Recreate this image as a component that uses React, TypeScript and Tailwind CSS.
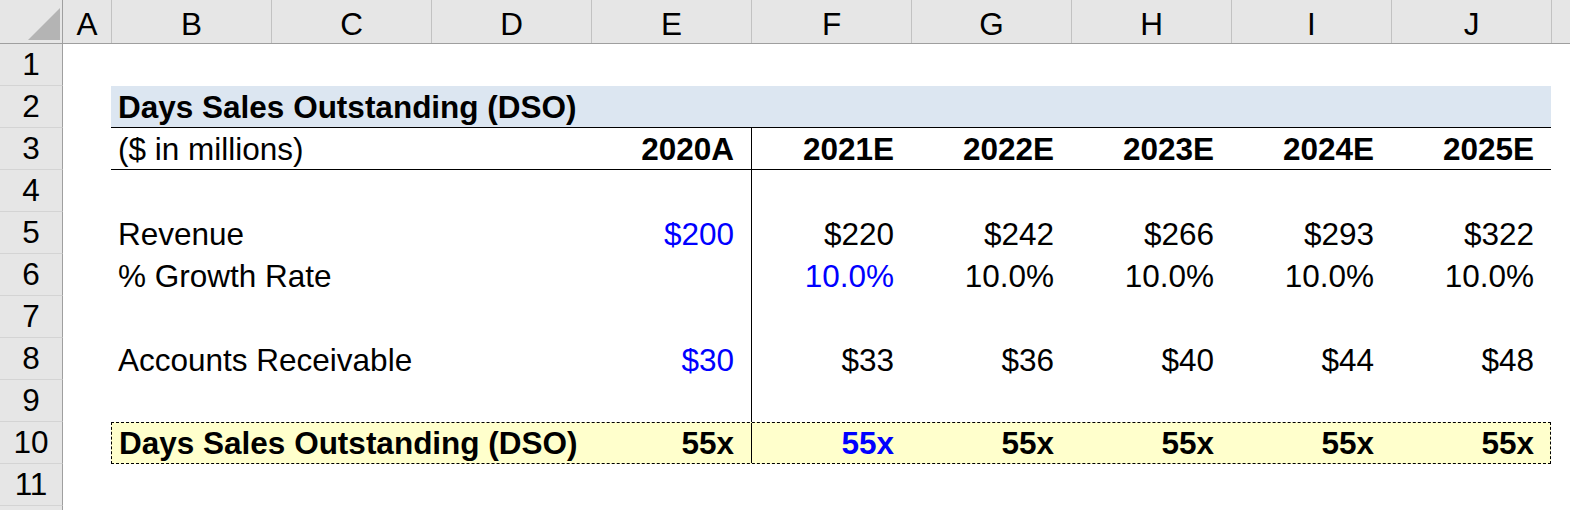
import clsx from 'clsx'
import { FC, ReactNode } from 'react'

const columns = ['B', 'C', 'D', 'E', 'F', 'G', 'H', 'I', 'J']

const cell =
    'flex h-full shrink-0 items-end whitespace-nowrap pb-[4px] leading-none'

type ValueProps = {
    text?: string
    blue?: boolean
    bold?: boolean
    divider?: boolean
}

const Value: FC<ValueProps> = ({ text, blue, bold, divider }) => (
    <div
        className={clsx(
            cell,
            'w-[160px] justify-end pr-[17px]',
            blue ? 'text-[#0000ff]' : 'text-black',
            bold && 'font-bold',
            divider && 'border-l border-black'
        )}
    >
        {text}
    </div>
)

const Label: FC<{ text?: string; bold?: boolean; w?: string }> = ({
    text,
    bold,
    w = 'w-[480px]'
}) => (
    <div className={clsx(cell, w, 'pl-[7px]', bold && 'font-bold')}>
        {text}
    </div>
)

const Row: FC<{ n?: number; children?: ReactNode }> = ({ n, children }) => (
    <div className="flex h-[42px]">
        <div className="flex w-[63px] shrink-0 items-center justify-center border-r border-b border-r-[#9f9f9f] border-b-[#d4d4d4] bg-[#e6e6e6] leading-none">
            {n}
        </div>
        <div className="w-[48px] shrink-0" />
        {children}
    </div>
)

// one data row: label + 2020A + five forecast years
const DataRow: FC<{
    n: number
    label: string
    base?: string
    values: string[]
    firstBlue?: boolean
}> = ({ n, label, base, values, firstBlue }) => (
    <Row n={n}>
        <div className="flex h-full w-[1440px] shrink-0">
            <Label text={label} />
            <Value text={base} blue />
            {values.map((v, i) => (
                <Value
                    key={i}
                    text={v}
                    blue={firstBlue && i === 0}
                    divider={i === 0}
                />
            ))}
        </div>
    </Row>
)

const EmptyDivided: FC<{ n: number }> = ({ n }) => (
    <Row n={n}>
        <div className="flex h-full w-[1440px] shrink-0">
            <div className="w-[640px] shrink-0" />
            <div className="h-full w-[160px] shrink-0 border-l border-black" />
        </div>
    </Row>
)

export default function App() {
    return (
        <div className="h-[510px] w-[1570px] overflow-hidden bg-white font-['Liberation_Sans',Arial,sans-serif] text-[31.5px] text-black">
            {/* column headers */}
            <div className="flex h-[44px] border-b border-[#9f9f9f] bg-[#e6e6e6]">
                <div className="w-[63px] shrink-0 border-r border-[#9f9f9f]">
                    <svg width="62" height="43" viewBox="0 0 62 43">
                        <polygon points="60,8 60,40 28,40" fill="#b4b4b4" />
                    </svg>
                </div>
                <div className="flex w-[49px] shrink-0 items-center justify-center border-r border-[#c2c2c2] pt-[6px] leading-none">
                    A
                </div>
                {columns.map((c) => (
                    <div
                        key={c}
                        className="flex w-[160px] shrink-0 items-center justify-center border-r border-[#c2c2c2] pt-[6px] leading-none"
                    >
                        {c}
                    </div>
                ))}
                <div className="flex-1" />
            </div>

            <Row n={1} />

            <Row n={2}>
                <div className="flex h-full w-[1440px] shrink-0 border-b border-black bg-[#dce6f1]">
                    <Label text="Days Sales Outstanding (DSO)" bold />
                </div>
            </Row>

            <Row n={3}>
                <div className="flex h-full w-[1440px] shrink-0 border-b border-black">
                    <Label text="($ in millions)" />
                    <Value text="2020A" bold />
                    {['2021E', '2022E', '2023E', '2024E', '2025E'].map(
                        (y, i) => (
                            <Value key={y} text={y} bold divider={i === 0} />
                        )
                    )}
                </div>
            </Row>

            <EmptyDivided n={4} />

            <DataRow
                n={5}
                label="Revenue"
                base="$200"
                values={['$220', '$242', '$266', '$293', '$322']}
            />
            <DataRow
                n={6}
                label="% Growth Rate"
                values={['10.0%', '10.0%', '10.0%', '10.0%', '10.0%']}
                firstBlue
            />

            <EmptyDivided n={7} />

            <DataRow
                n={8}
                label="Accounts Receivable"
                base="$30"
                values={['$33', '$36', '$40', '$44', '$48']}
            />

            <EmptyDivided n={9} />

            <Row n={10}>
                <div className="flex h-full w-[1440px] shrink-0 border border-dashed border-black bg-[#ffffcc] font-bold">
                    <Label
                        text="Days Sales Outstanding (DSO)"
                        bold
                        w="w-[479px]"
                    />
                    <Value text="55x" bold />
                    <Value text="55x" bold blue divider />
                    <Value text="55x" bold />
                    <Value text="55x" bold />
                    <Value text="55x" bold />
                    <div
                        className={clsx(
                            cell,
                            'w-[159px] justify-end pr-[16px]'
                        )}
                    >
                        55x
                    </div>
                </div>
            </Row>

            <Row n={11} />
            {/* next row only peeks in at the bottom edge */}
            <Row />
        </div>
    )
}
